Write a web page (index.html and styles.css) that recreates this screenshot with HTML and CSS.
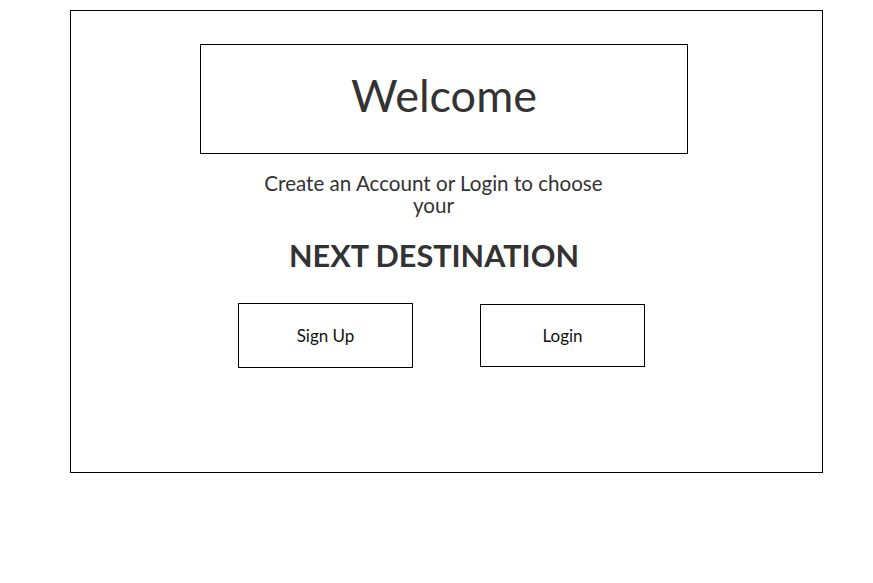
FILE: index.html
```html
<!DOCTYPE html>
<html>
<head>
<meta charset="utf-8">
<link rel="stylesheet" href="styles.css">
</head>
<body>
<div class="frame">
  <div class="welcome"><h1 class="welcome-title">Welcome</h1></div>
  <p class="subtitle">Create an Account or Login to choose your</p>
  <h2 class="destination">NEXT DESTINATION</h2>
  <div class="actions">
    <button class="btn btn-signup">Sign Up</button>
    <button class="btn btn-login">Login</button>
  </div>
</div>
</body>
</html>
```
FILE: styles.css
```css
html, body {
  margin: 0;
  padding: 0;
  background: #fff;
}
body {
  font-family: Lato, "Open Sans", sans-serif;
  color: #333;
}
.frame {
  box-sizing: border-box;
  margin: 10px 0 0 70px;
  width: 753px;
  height: 463px;
  border: 1px solid #000;
  display: flex;
  flex-direction: column;
}
.welcome {
  box-sizing: border-box;
  margin: 33px 0 0 129px;
  width: 488px;
  height: 110px;
  border: 1px solid #000;
  display: flex;
  justify-content: center;
  align-items: center;
}
.welcome-title {
  margin: 0 0 8px 0;
  font-weight: 400;
  font-size: 45px;
  line-height: 1;
}
.subtitle {
  margin: 18px 0 0 187px;
  width: 351px;
  text-align: center;
  font-size: 20.6px;
  line-height: 22px;
}
.destination {
  margin: 20px 0 0 187px;
  width: 352px;
  text-align: center;
  font-size: 30.6px;
  font-weight: 700;
  line-height: 40px;
}
.actions {
  display: flex;
  align-items: center;
  margin: 27px 0 0 167px;
  gap: 67px;
}
.btn {
  box-sizing: border-box;
  background: #fff;
  border: 1px solid #000;
  font-family: inherit;
  font-size: 17px;
  color: #111;
  padding: 0;
}
.btn-signup {
  width: 175px;
  height: 65px;
}
.btn-login {
  width: 165px;
  height: 63px;
}
```
